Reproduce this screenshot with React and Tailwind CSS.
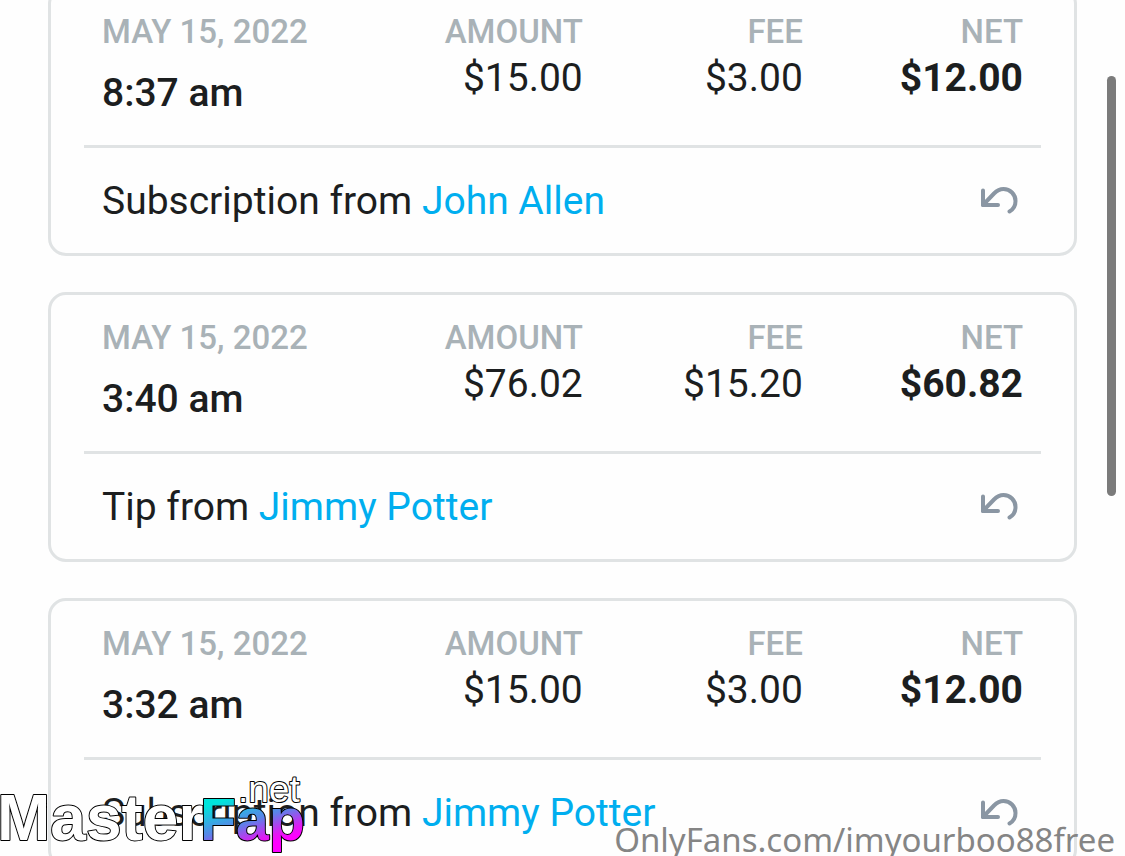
const transactions = [
  { date: 'May 15, 2022', time: '8:37 am', amount: '$15.00', fee: '$3.00', net: '$12.00', type: 'Subscription', user: 'John Allen' },
  { date: 'May 15, 2022', time: '3:40 am', amount: '$76.02', fee: '$15.20', net: '$60.82', type: 'Tip', user: 'Jimmy Potter' },
  { date: 'May 15, 2022', time: '3:32 am', amount: '$15.00', fee: '$3.00', net: '$12.00', type: 'Subscription', user: 'Jimmy Potter' },
]

export default function App() {
  return (
    <div className="relative h-screen overflow-hidden bg-[#fefefe] font-['Roboto',sans-serif] text-[#1c1e1f]">
      <main className="-mt-[14px] flex flex-col gap-9 px-12">
        {transactions.map((item) => (
          <TransactionCard key={item.time} item={item} />
        ))}
      </main>

      <div className="absolute right-[9px] top-[76px] h-[420px] w-[9px] rounded-full bg-[#7b7b7b]" />

      <SiteLogo />
      <p className="absolute -bottom-[6px] right-[10px] font-['Noto_Sans',sans-serif] text-[33px] leading-[44px] text-[#858585]">
        OnlyFans.com/imyourboo88free
      </p>
    </div>
  )
}


function TransactionCard({ item }) {
  return (
    <article className="rounded-[18px] border-[3px] border-[#e0e3e4] px-[33px]">
      <table className="w-full table-fixed">
        <thead>
          <tr className="text-[33px] leading-10 font-medium uppercase text-[#a9b2b7]">
            <HeaderCell className="text-left">{item.date}</HeaderCell>
            <HeaderCell className="w-[23%] text-right">Amount</HeaderCell>
            <HeaderCell className="w-[23%] text-right">Fee</HeaderCell>
            <HeaderCell className="w-[23%] text-right">Net</HeaderCell>
          </tr>
        </thead>
        <tbody>
          <tr className="border-b-[3px] border-[#e0e3e4] align-top text-[39px] leading-[52px]">
            <td className="px-[18px] pt-[15px] pb-[26px] font-medium">{item.time}</td>
            <td className="px-[18px] text-right">{item.amount}</td>
            <td className="px-[18px] text-right">{item.fee}</td>
            <td className="px-[18px] text-right font-bold">{item.net}</td>
          </tr>
        </tbody>
      </table>

      <div className="flex h-[105px] items-center justify-between px-[18px] text-[39px] leading-[52px]">
        <p>
          {item.type} from <a href="#" className="text-[#00aeef]">{item.user}</a>
        </p>
        <button type="button" aria-label="Refund">
          <UndoIcon />
        </button>
      </div>
    </article>
  )
}


function HeaderCell({ className, children }) {
  return (
    <th scope="col" className={`px-[18px] pt-[23px] font-medium ${className}`}>
      {children}
    </th>
  )
}


function UndoIcon() {
  return (
    <svg width="42" height="32" viewBox="0 0 42 32" fill="none" stroke="#8a96a3" strokeWidth="4" strokeLinecap="round" strokeLinejoin="round">
      <path d="M2 5.500v14.500h15" />
      <path d="M2 20L13 8.500C16 5.500 18.500 4 22.500 4A12 12 0 0 1 34.500 16C34.500 20.500 32 24.500 28.500 26.500" />
    </svg>
  )
}


function SiteLogo() {
  return (
    <svg
      className="absolute bottom-0 left-0 font-['Liberation_Sans',sans-serif]"
      width="310"
      height="86"
      viewBox="0 0 310 86"
      stroke="#000"
      strokeWidth="2"
      strokeLinejoin="round"
      paintOrder="stroke"
    >
      <defs>
        <linearGradient id="fap" gradientUnits="userSpaceOnUse" x1="230" y1="28" x2="248" y2="82">
          <stop offset="0" stopColor="#00e5dc" />
          <stop offset="0.500" stopColor="#5b83e8" />
          <stop offset="0.850" stopColor="#e01af2" />
          <stop offset="1" stopColor="#ff00ff" />
        </linearGradient>
      </defs>
      <text x="-3" y="70" fontSize="64" fontWeight="700" fill="#fff">Master</text>
      <text x="200" y="70" fontSize="59" fontWeight="700" fill="url(#fap)">Fap</text>
      <text x="238" y="32" fontSize="37" fill="#fff">.net</text>
    </svg>
  )
}
